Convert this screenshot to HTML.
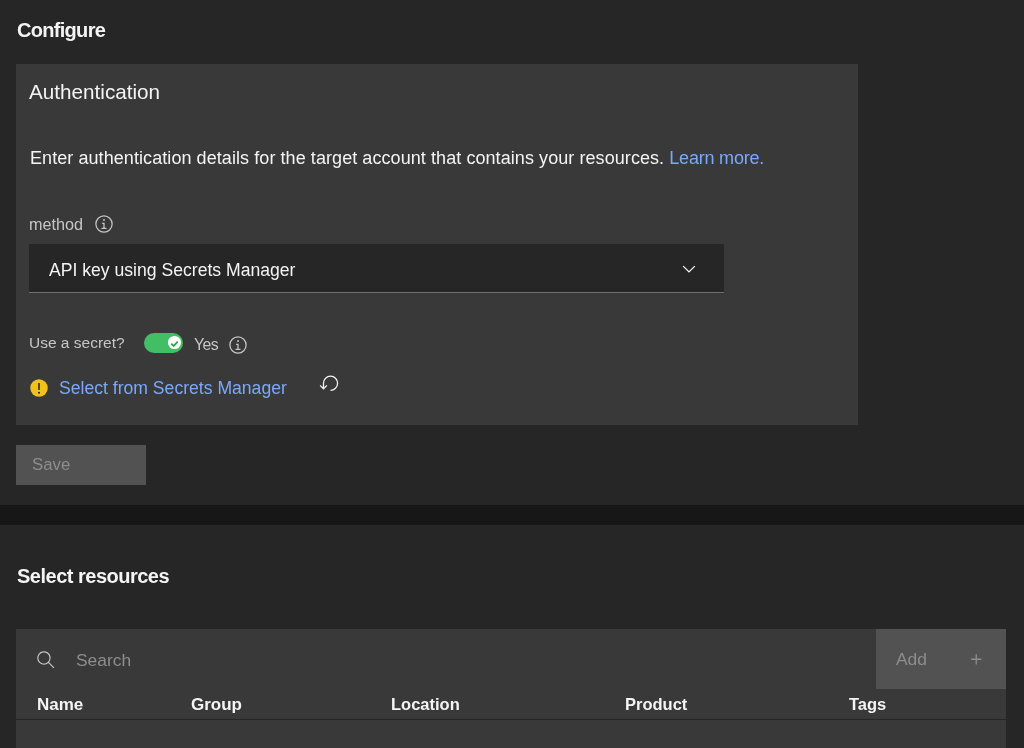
<!DOCTYPE html>
<html>
<head>
<meta charset="utf-8">
<style>
*{box-sizing:border-box;margin:0;padding:0}
html,body{width:1024px;height:748px;overflow:hidden;background:#262626;font-family:"Liberation Sans",sans-serif;color:#f4f4f4}
.a{position:absolute;white-space:nowrap}
.t{line-height:1;will-change:transform}
</style>
</head>
<body>
<!-- Configure heading -->
<div class="a t" id="configure" style="left:17px;top:20px;font-size:20px;font-weight:700;letter-spacing:-0.7px;color:#f4f4f4">Configure</div>

<!-- Auth panel -->
<div class="a" style="left:16px;top:64px;width:842px;height:361px;background:#393939"></div>
<div class="a t" id="auth" style="left:29px;top:82px;font-size:20.7px;color:#f4f4f4">Authentication</div>
<div class="a t" id="body" style="left:30px;top:149px;font-size:18px;letter-spacing:0.072px;color:#f4f4f4">Enter authentication details for the target account that contains your resources. <span style="color:#78a9ff;letter-spacing:-0.2px">Learn more.</span></div>

<div class="a t" id="method" style="left:29.3px;top:215.5px;font-size:16.2px;color:#c6c6c6">method</div>
<svg class="a" style="left:93.6px;top:213.8px" width="20" height="20" viewBox="0 0 32 32"><path d="M17 22v-8h-4v2h2v6h-3v2h8v-2h-3z M16 8a1.5 1.5 0 1 0 1.5 1.5A1.5 1.5 0 0 0 16 8z M16 30a14 14 0 1 1 14-14 14 14 0 0 1-14 14zm0-26a12 12 0 1 0 12 12A12 12 0 0 0 16 4z" fill="#c6c6c6"/></svg>

<!-- dropdown -->
<div class="a" style="left:29px;top:244px;width:695px;height:49px;background:#262626;border-bottom:1px solid #6f6f6f"></div>
<div class="a t" id="dd" style="left:49px;top:261.6px;font-size:17.6px;color:#f4f4f4">API key using Secrets Manager</div>
<svg class="a" style="left:678.6px;top:258.6px" width="20" height="20" viewBox="0 0 16 16"><path d="M8 11L3 6l.7-.7L8 9.6l4.3-4.3.7.7z" fill="#f4f4f4"/></svg>

<!-- toggle row -->
<div class="a t" id="use" style="left:29px;top:335px;font-size:15.5px;color:#c6c6c6">Use a secret?</div>
<div class="a" style="left:143.5px;top:333.3px;width:39.8px;height:20px;border-radius:10px;background:#42be65"></div>
<div class="a" style="left:168.4px;top:336.4px;width:12.8px;height:12.8px;border-radius:50%;background:#fff"></div>
<svg class="a" style="left:165px;top:336px" width="20" height="14" viewBox="0 0 20 14"><path d="M6.2 7.6l2.5 2.3 4.1-4.2" fill="none" stroke="#30a852" stroke-width="1.9"/></svg>
<div class="a t" id="yes" style="left:193.5px;top:337.2px;font-size:15.8px;letter-spacing:-0.6px;color:#c6c6c6">Yes</div>
<svg class="a" style="left:227.8px;top:334.7px" width="20" height="20" viewBox="0 0 32 32"><path d="M17 22v-8h-4v2h2v6h-3v2h8v-2h-3z M16 8a1.5 1.5 0 1 0 1.5 1.5A1.5 1.5 0 0 0 16 8z M16 30a14 14 0 1 1 14-14 14 14 0 0 1-14 14zm0-26a12 12 0 1 0 12 12A12 12 0 0 0 16 4z" fill="#c6c6c6"/></svg>

<!-- warning + link -->
<svg class="a" style="left:29px;top:378px" width="20" height="20" viewBox="0 0 32 32"><circle cx="16" cy="16" r="14" fill="#f1c21b"/><path d="M14.9 8h2.2v11h-2.2z M16 25a1.5 1.5 0 1 1 1.5-1.5A1.5 1.5 0 0 1 16 25z" fill="#161616"/></svg>
<div class="a t" id="sel" style="left:59px;top:380.2px;font-size:17.6px;color:#78a9ff">Select from Secrets Manager</div>
<svg class="a" style="left:318.6px;top:372.7px" width="20.5" height="20.5" viewBox="0 0 32 32"><path d="M18,28A12,12,0,1,0,6,16v6.2L2.4,18.6,1,20l6,6,6-6-1.4-1.4L8,22.2V16H8A10,10,0,1,1,18,26Z" fill="#f4f4f4"/></svg>

<!-- save -->
<div class="a" style="left:16px;top:445px;width:130px;height:40px;background:#525252"></div>
<div class="a t" id="save" style="left:32.3px;top:457.3px;font-size:16.8px;color:#8d8d8d">Save</div>

<!-- band -->
<div class="a" style="left:0;top:505px;width:1024px;height:20px;background:#171717"></div>

<!-- select resources -->
<div class="a t" id="selres" style="left:17px;top:566px;font-size:20px;font-weight:700;letter-spacing:-0.5px;color:#f4f4f4">Select resources</div>

<!-- table -->
<div class="a" style="left:16px;top:629px;width:990px;height:130px;background:#393939"></div>
<svg class="a" style="left:36.3px;top:649.8px" width="19.6" height="19.6" viewBox="0 0 16 16"><path d="M15,14.3L10.7,10c1.9-2.3,1.6-5.8-0.7-7.7S4.2,0.7,2.3,3S0.7,8.8,3,10.7c2,1.7,5,1.7,7,0l4.3,4.3L15,14.3z M2,6.5C2,4,4,2,6.5,2S11,4,11,6.5S9,11,6.5,11S2,9,2,6.5z" fill="#c6c6c6"/></svg>
<div class="a t" id="search" style="left:76px;top:652px;font-size:17.4px;color:#8d8d8d">Search</div>
<div class="a" style="left:876px;top:629px;width:130px;height:60px;background:#525252"></div>
<div class="a t" id="add" style="left:896px;top:651px;font-size:17.4px;color:#8d8d8d">Add</div>
<svg class="a" style="left:965.9px;top:649px" width="20.5" height="20.5" viewBox="0 0 32 32"><path d="M17 15L17 8 15 8 15 15 8 15 8 17 15 17 15 24 17 24 17 17 24 17 24 15z" fill="#8d8d8d"/></svg>

<div class="a t" style="left:37px;top:696px;font-size:17px;font-weight:700;color:#f4f4f4">Name</div>
<div class="a t" style="left:191px;top:696px;font-size:17px;font-weight:700;color:#f4f4f4">Group</div>
<div class="a t" style="left:391px;top:696px;font-size:16.5px;font-weight:700;color:#f4f4f4">Location</div>
<div class="a t" style="left:625px;top:696px;font-size:16.5px;font-weight:700;color:#f4f4f4">Product</div>
<div class="a t" style="left:849px;top:696px;font-size:16.5px;font-weight:700;color:#f4f4f4">Tags</div>
<div class="a" style="left:16px;top:719px;width:990px;height:1px;background:#262626"></div>
</body>
</html>
